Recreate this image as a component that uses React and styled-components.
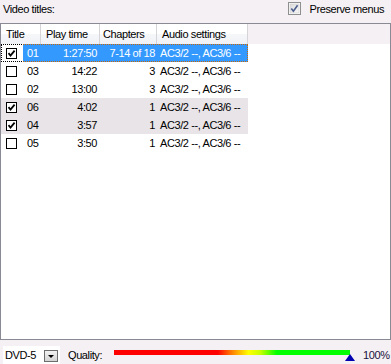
import React from 'react';
import styled, { createGlobalStyle } from 'styled-components';

const GlobalStyle = createGlobalStyle`
  html, body {
    margin: 0;
    padding: 0;
    background: #f4f0f4;
  }
  body {
    font-family: 'Liberation Sans', Arial, sans-serif;
    font-size: 11px;
    letter-spacing: -0.4px;
    color: #000;
  }
`;

const Page = styled.div`
  width: 391px;
  height: 364px;
  display: flex;
  flex-direction: column;
  overflow: hidden;
`;

const TopBar = styled.div`
  height: 23px;
  display: flex;
  align-items: flex-start;
  justify-content: space-between;
  padding: 2px 7px 0 3px;
  box-sizing: border-box;
  line-height: 14px;
`;

const Toggle = styled.label`
  display: flex;
  align-items: flex-start;
  gap: 9px;
  svg {
    margin-top: 0;
  }
`;

const ListBox = styled.div`
  height: 317px;
  border: 1px solid #8a8a94;
  background: #fff;
  box-sizing: border-box;
  display: flex;
  flex-direction: column;
`;

const HeaderRow = styled.div`
  height: 20px;
  display: flex;
  background: #f4f0f4;
`;

const HeaderCell = styled.div`
  width: ${(p) => p.$w}px;
  box-sizing: border-box;
  padding-left: ${(p) => p.$pad}px;
  border-right: 1px solid #d5d5d8;
  background: linear-gradient(#ffffff 0%, #ffffff 50%, #f6f7f9 50%, #f1f2f5 100%);
  line-height: 20px;
  white-space: nowrap;
  overflow: hidden;
`;

const Row = styled.div`
  position: relative;
  width: 247px;
  height: 18px;
  display: flex;
  line-height: 18px;
  background: ${(p) => (p.$checked ? '#e8e4e8' : 'transparent')};
`;

const CheckSlot = styled.div`
  width: 22px;
  box-sizing: border-box;
  padding-left: 5px;
  display: flex;
  align-items: center;
  background: ${(p) => (p.$selected ? '#fff' : 'transparent')};
`;

const Cell = styled.div`
  width: ${(p) => p.$w}px;
  box-sizing: border-box;
  padding: 0 ${(p) => p.$pr || 0}px 0 ${(p) => p.$pl || 0}px;
  text-align: ${(p) => p.$align || 'left'};
  white-space: nowrap;
  overflow: hidden;
  background: ${(p) => (p.$selected ? '#3399ff' : 'transparent')};
  color: ${(p) => (p.$selected ? '#fff' : '#000')};
`;

const FocusRing = styled.span`
  position: absolute;
  inset: 0;
  border: 1px dotted #000;
  pointer-events: none;
`;

const SelectionRing = styled.span`
  position: absolute;
  top: 0;
  bottom: 0;
  left: 22px;
  right: 0;
  border: 1px dotted #cc6600;
  border-left: none;
  pointer-events: none;
`;

const BottomBar = styled.div`
  flex: 1;
  display: flex;
  align-items: flex-start;
  padding: 6px 0 0 3px;
  line-height: 18px;
`;

const Combo = styled.div`
  width: 57px;
  height: 18px;
  background: #fff;
  display: flex;
  align-items: flex-start;
  justify-content: space-between;
  padding-left: 2px;
  box-sizing: border-box;
`;

const ComboButton = styled.div`
  width: 14px;
  height: 12px;
  margin: 4px 2px 0 0;
  box-sizing: border-box;
  border: 1px solid #6d6d6d;
  background: linear-gradient(#f2f2f2, #d4d4d4);
  display: flex;
  align-items: center;
  justify-content: center;
  &::after {
    content: '';
    border-left: 3px solid transparent;
    border-right: 3px solid transparent;
    border-top: 3px solid #000;
    margin-top: 1px;
  }
`;

const QualityLabel = styled.span`
  margin-left: 8px;
  width: 46px;
`;

const Meter = styled.div`
  position: relative;
  width: 236px;
  height: 5px;
  margin-top: 4px;
  background: linear-gradient(
    to right,
    #ff0000 0%,
    #ff0000 44%,
    #ff8000 50%,
    #ffff00 57%,
    #c8ff00 62%,
    #00ff00 69%,
    #00ff00 100%
  );
`;

const Marker = styled.span`
  position: absolute;
  right: -5px;
  top: 4px;
  width: 0;
  height: 0;
  border-left: 5px solid transparent;
  border-right: 5px solid transparent;
  border-bottom: 7px solid #0000b0;
`;

const Percent = styled.span`
  margin-left: 13px;
  color: #1a1040;
`;

function ListCheck({ checked }) {
  return (
    <svg width="11" height="11" viewBox="0 0 11 11">
      <rect x="0.5" y="0.5" width="10" height="10" fill="#fff" stroke="#000" />
      {checked && (
        <path d="M2.5 5.2 L4.5 7.5 L8.6 2.6" fill="none" stroke="#000" strokeWidth="1.8" />
      )}
    </svg>
  );
}

function ThemedCheck() {
  return (
    <svg width="13" height="13" viewBox="0 0 13 13">
      <defs>
        <linearGradient id="cbfill" x1="0" y1="0" x2="1" y2="1">
          <stop offset="0" stopColor="#dcdcdc" />
          <stop offset="1" stopColor="#f7f7f7" />
        </linearGradient>
      </defs>
      <rect x="0.5" y="0.5" width="12" height="12" fill="#fdfdfd" stroke="#8e8f8f" />
      <rect x="2" y="2" width="9" height="9" fill="url(#cbfill)" stroke="#c8c8c8" strokeWidth="0.5" />
      <path d="M3.3 6.4 L5.4 9.2 L9.6 3.3" fill="none" stroke="#4a5d8c" strokeWidth="1.6" />
    </svg>
  );
}

const columns = [
  { key: 'title', label: 'Title', w: 40, pad: 5 },
  { key: 'time', label: 'Play time', w: 59, pad: 5 },
  { key: 'chapters', label: 'Chapters', w: 57, pad: 3 },
  { key: 'audio', label: 'Audio settings', w: 91, pad: 5 },
];

const titles = [
  { id: '01', time: '1:27:50', chapters: '7-14 of 18', checked: true, selected: true },
  { id: '03', time: '14:22', chapters: '3' },
  { id: '02', time: '13:00', chapters: '3' },
  { id: '06', time: '4:02', chapters: '1', checked: true },
  { id: '04', time: '3:57', chapters: '1', checked: true },
  { id: '05', time: '3:50', chapters: '1' },
];

const audio = 'AC3/2 --, AC3/6 --';

export default function App() {
  return (
    <>
      <GlobalStyle />
      <Page>
        <TopBar>
          <span>Video titles:</span>
          <Toggle>
            <ThemedCheck />
            Preserve menus
          </Toggle>
        </TopBar>

        <ListBox>
          <HeaderRow>
            {columns.map((c) => (
              <HeaderCell key={c.key} $w={c.w} $pad={c.pad}>
                {c.label}
              </HeaderCell>
            ))}
          </HeaderRow>
          {titles.map((t) => (
            <Row key={t.id} $checked={t.checked && !t.selected}>
              <CheckSlot $selected={t.selected}>
                <ListCheck checked={t.checked} />
              </CheckSlot>
              <Cell $w={18} $pl={4} $selected={t.selected}>{t.id}</Cell>
              <Cell $w={59} $pr={3} $align="right" $selected={t.selected}>{t.time}</Cell>
              <Cell $w={57} $pr={2} $align="right" $selected={t.selected}>{t.chapters}</Cell>
              <Cell $w={91} $pl={3} $selected={t.selected}>{audio}</Cell>
              {t.selected && <FocusRing />}
              {t.selected && <SelectionRing />}
            </Row>
          ))}
        </ListBox>

        <BottomBar>
          <Combo>
            <span>DVD-5</span>
            <ComboButton />
          </Combo>
          <QualityLabel>Quality:</QualityLabel>
          <Meter>
            <Marker />
          </Meter>
          <Percent>100%</Percent>
        </BottomBar>
      </Page>
    </>
  );
}
